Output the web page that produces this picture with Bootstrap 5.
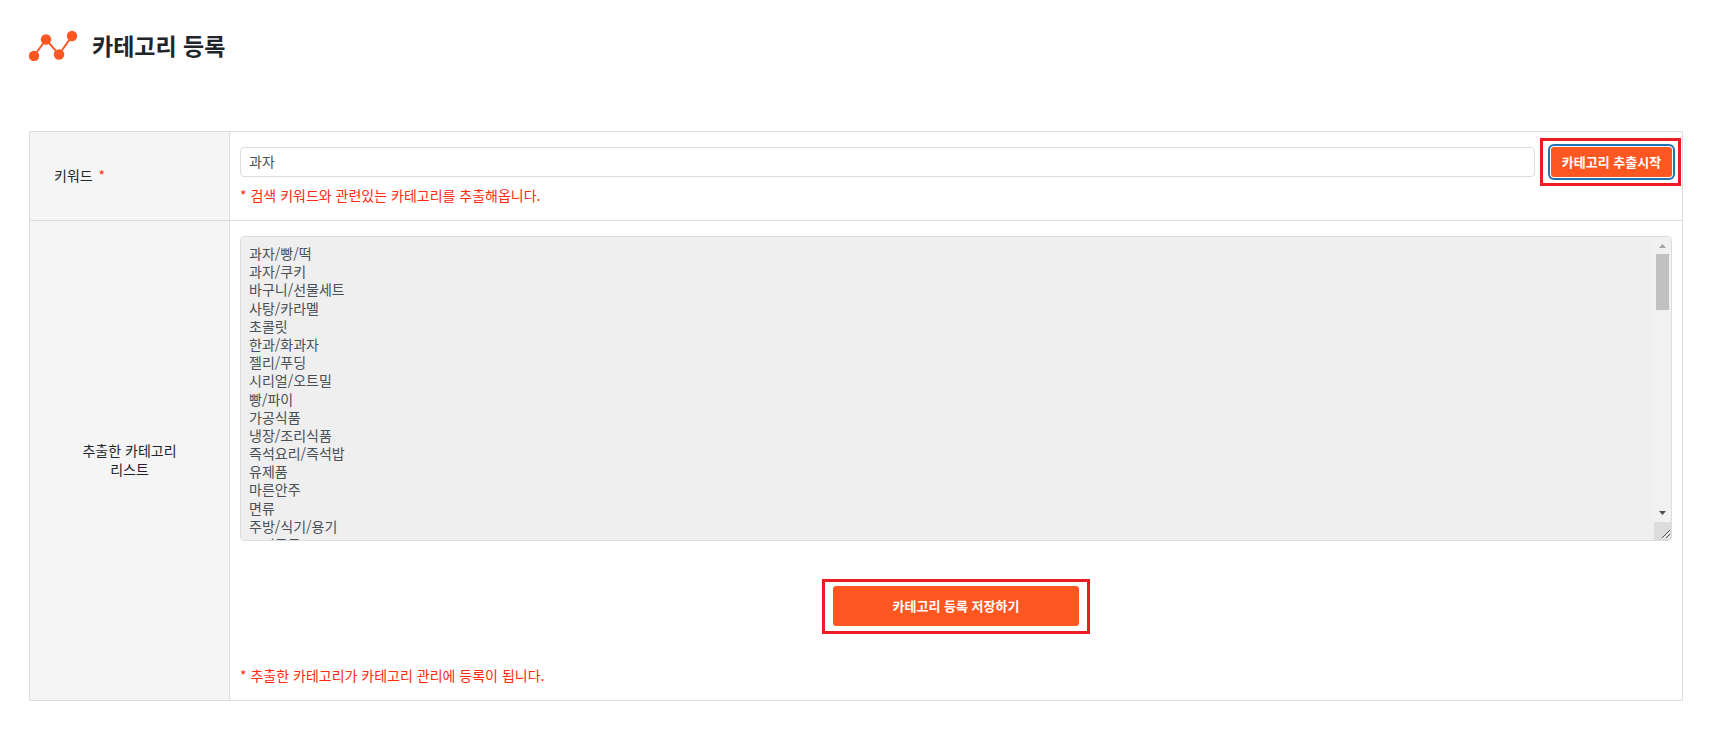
<!DOCTYPE html>
<html lang="ko">
<head>
<meta charset="utf-8">
<meta name="viewport" content="width=device-width, initial-scale=1">
<title>카테고리 등록</title>
<link href="https://cdn.jsdelivr.net/npm/bootstrap@5.3.0/dist/css/bootstrap.min.css" rel="stylesheet">
<style>
  body { font-family: "Noto Sans CJK KR", "Noto Sans", sans-serif; font-size: 14px; line-height: 19px; color: #212529; }
  .page { padding: 27px 30px 28px 29px; }
  .page-head { gap: 14px; margin-bottom: 68px; }
  .page-title { font-size: 23px; line-height: 36px; font-weight: 700; }
  .form-grid { border: 1px solid #ddd; }
  .form-grid th, .form-grid td { border: 1px solid #ddd; }
  .form-grid th { width: 200px; background: #f5f5f5; font-weight: 400; padding: 0 24px 2px; }
  .form-grid td { padding: 15px 10px; }
  .form-grid .form-control { border-color: #ddd; color: #495057; font-size: 14px; border-radius: 4px; }
  .form-grid .form-control:focus { box-shadow: none; }
  .form-grid input.form-control { height: 30px; padding: 0 8px 2px; }
  .form-grid textarea.form-control { height: 305px; padding: 7px 24px 7px 8px; line-height: 1.3; background: #efefef; resize: none; scrollbar-width: none; }
  .scroll-rail { position: absolute; top: 1px; right: 1px; bottom: 1px; width: 17px; background: #f1f1f1; border-radius: 0 3px 3px 0; overflow: hidden; pointer-events: none; }
  .rail-arrow { height: 17px; }
  .rail-thumb { width: 13px; height: 56px; background: #c1c1c1; }
  .rail-corner { height: 18px; background: #dcdcdc; }
  .btn-brand { --bs-btn-bg: #ff5722; --bs-btn-color: #fff; --bs-btn-hover-bg: #f04a17; --bs-btn-hover-color: #fff; --bs-btn-active-bg: #e64414; --bs-btn-active-color: #fff; font-size: 13px; line-height: 18px; border: 0; border-radius: 3px; padding: 0 0 1px; font-weight: 700; }
  .btn-extract { width: 121px; height: 30px; box-shadow: 0 0 0 1px #fff, 0 0 0 3px #2271b1; }
  .btn-save { width: 246px; height: 40px; }
  .extract-wrap::after { content: ""; position: absolute; inset: -9px -9px -9px -11px; border: 3px solid #ed1c24; pointer-events: none; }
  .save-wrap { border: 3px solid #ed1c24; padding: 4px 8px 5px; margin: 38px 0 31px; }
  .hint, .req { color: #ff2a10; }
  .hint { line-height: 20px; }
  .req { margin-left: 2px; }
</style>
</head>
<body class="bg-white">
<main class="page">
  <header class="page-head d-flex align-items-center">
    <svg width="49" height="32" viewBox="0 0 49 32" fill="#ff5722" aria-hidden="true">
      <path d="M5 27 17 10.500 30 25.500 43 7" fill="none" stroke="#ff5722" stroke-width="2"/>
      <circle cx="5" cy="27" r="5.200"/><circle cx="17" cy="10.500" r="5.200"/><circle cx="30" cy="25.500" r="5.200"/><circle cx="43" cy="7" r="5.200"/>
    </svg>
    <h1 class="page-title mb-0">카테고리 등록</h1>
  </header>
  <form>
    <table class="form-grid w-100">
      <tbody>
        <tr>
          <th scope="row"><label for="keyword">키워드 <span class="req">*</span></label></th>
          <td>
            <div class="d-flex gap-3">
              <input id="keyword" type="text" class="form-control flex-grow-1" value="과자">
              <div class="extract-wrap position-relative"><button type="button" class="btn btn-brand btn-extract d-block">카테고리 추출시작</button></div>
            </div>
            <p class="hint mt-2 mb-0">* 검색 키워드와 관련있는 카테고리를 추출해옵니다.</p>
          </td>
        </tr>
        <tr>
          <th scope="row" class="text-center"><label for="list">추출한 카테고리<br>리스트</label></th>
          <td>
            <div class="position-relative">
              <textarea id="list" class="form-control d-block" readonly>과자/빵/떡
과자/쿠키
바구니/선물세트
사탕/카라멜
초콜릿
한과/화과자
젤리/푸딩
시리얼/오트밀
빵/파이
가공식품
냉장/조리식품
즉석요리/즉석밥
유제품
마른안주
면류
주방/식기/용기
조리도구</textarea>
              <div class="scroll-rail d-flex flex-column" aria-hidden="true">
                <svg class="rail-arrow" width="17" viewBox="0 0 17 17"><path d="M8.500 7 12 11H5z" fill="#a3a3a3"/></svg>
                <div class="rail-thumb mx-auto"></div>
                <svg class="rail-arrow mt-auto" width="17" viewBox="0 0 17 17"><path d="M5 6h7L8.500 10z" fill="#505050"/></svg>
                <svg class="rail-corner" width="17" viewBox="0 0 17 18"><path d="M8 16 16 8M12 16l4-4" stroke="#505050" stroke-width="1"/><path d="M9 17l7-7M13 17l3-3" stroke="#fff" stroke-width="1"/></svg>
              </div>
            </div>
            <div class="d-flex justify-content-center">
              <div class="save-wrap"><button type="submit" class="btn btn-brand btn-save d-block">카테고리 등록 저장하기</button></div>
            </div>
            <p class="hint mb-0">* 추출한 카테고리가 카테고리 관리에 등록이 됩니다.</p>
          </td>
        </tr>
      </tbody>
    </table>
  </form>
</main>
<script src="https://cdn.jsdelivr.net/npm/bootstrap@5.3.0/dist/js/bootstrap.bundle.min.js"></script>
</body>
</html>
